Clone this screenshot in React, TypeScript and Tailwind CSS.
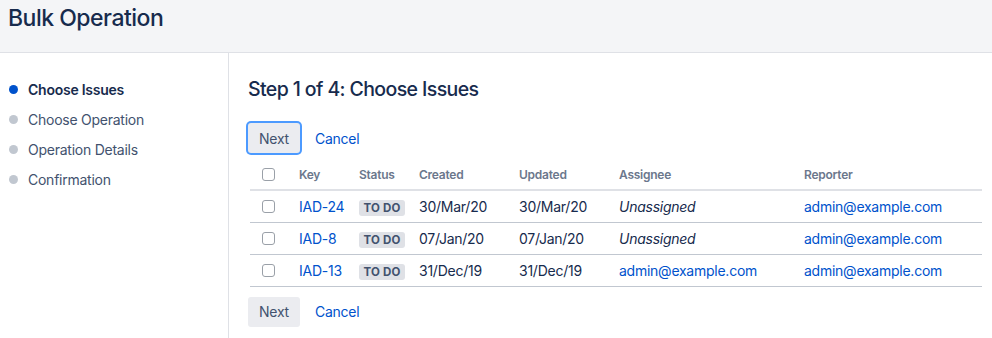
import React from "react";

const steps = [
  { label: "Choose Issues", active: true },
  { label: "Choose Operation", active: false },
  { label: "Operation Details", active: false },
  { label: "Confirmation", active: false },
];

const issues = [
  { key: "IAD-24", created: "30/Mar/20", updated: "30/Mar/20", assignee: null },
  { key: "IAD-8", created: "07/Jan/20", updated: "07/Jan/20", assignee: null },
  { key: "IAD-13", created: "31/Dec/19", updated: "31/Dec/19", assignee: "admin@example.com" },
];

const Checkbox = () => (
  <span className="ml-[12px] block w-[13px] h-[13px] rounded-[3px] border border-[#9aa0a8] bg-white" />
);

const Actions = ({ focused }: { focused?: boolean }) => (
  <div className="flex items-center">
    <button
      className={
        "h-[30px] w-[52px] rounded-[3px] bg-[#ebecf0] text-[14px] text-[#42526e] " +
        (focused ? "ring-2 ring-[#4c9aff]" : "")
      }
    >
      Next
    </button>
    <a className="ml-[15px] text-[14px] text-[#0052cc]">Cancel</a>
  </div>
);

export default function App() {
  return (
    <div className="w-[992px] h-[338px] bg-white text-[#172b4d] font-['Inter',sans-serif] tracking-[-0.25px] overflow-hidden">
      <header className="h-[53px] bg-[#f4f5f7] border-b border-[#dfe1e6] pl-[8px] pt-[2px]">
        <h1 className="text-[23px] leading-[32px] font-medium tracking-[-0.5px]">Bulk Operation</h1>
      </header>
      <div className="flex h-[285px]">
        <nav className="w-[229px] border-r border-[#dfe1e6] pt-[21px]">
          {steps.map((s) => (
            <div key={s.label} className="flex items-center h-[30px] pl-[9px]">
              <span
                className={
                  "w-[9px] h-[9px] rounded-full " + (s.active ? "bg-[#0052cc]" : "bg-[#c1c7d0]")
                }
              />
              <span
                className={
                  "ml-[10px] text-[14px] " +
                  (s.active ? "font-semibold text-[#172b4d]" : "text-[#42526e]")
                }
              >
                {s.label}
              </span>
            </div>
          ))}
        </nav>
        <main className="flex-1 pl-[19px] pt-[23px]">
          <h2 className="text-[19.5px] leading-[26px] font-medium tracking-[-0.6px]">
            Step 1 of 4: Choose Issues
          </h2>
          <div className="mt-[21px]">
            <Actions focused />
          </div>
          <table className="mt-[7px] ml-[2px] w-[732px] border-collapse table-fixed text-left">
            <colgroup>
              <col className="w-[49px]" />
              <col className="w-[60px]" />
              <col className="w-[60px]" />
              <col className="w-[100px]" />
              <col className="w-[100px]" />
              <col className="w-[185px]" />
              <col />
            </colgroup>
            <thead>
              <tr className="h-[30px] border-b-2 border-[#dfe1e6] text-[12px] font-semibold text-[#6b778c]">
                <th className="p-0"><Checkbox /></th>
                <th className="p-0 font-semibold">Key</th>
                <th className="p-0 font-semibold">Status</th>
                <th className="p-0 font-semibold">Created</th>
                <th className="p-0 font-semibold">Updated</th>
                <th className="p-0 font-semibold">Assignee</th>
                <th className="p-0 font-semibold">Reporter</th>
              </tr>
            </thead>
            <tbody className="text-[14px]">
              {issues.map((i) => (
                <tr key={i.key} className="h-[32px] border-b border-[#c1c7d0]">
                  <td className="p-0"><Checkbox /></td>
                  <td className="p-0 text-[#0052cc]">{i.key}</td>
                  <td className="p-0">
                    <span className="inline-block w-[46px] text-center h-[16px] leading-[16px] rounded-[3px] bg-[#dfe1e6] text-[11.5px] font-bold tracking-[0.2px] text-[#42526e]">
                      TO DO
                    </span>
                  </td>
                  <td className="p-0">{i.created}</td>
                  <td className="p-0">{i.updated}</td>
                  <td className="p-0">
                    {i.assignee ? (
                      <span className="text-[#0052cc]">{i.assignee}</span>
                    ) : (
                      <em>Unassigned</em>
                    )}
                  </td>
                  <td className="p-0 text-[#0052cc]">admin@example.com</td>
                </tr>
              ))}
            </tbody>
          </table>
          <div className="mt-[10px]">
            <Actions />
          </div>
        </main>
      </div>
    </div>
  );
}
